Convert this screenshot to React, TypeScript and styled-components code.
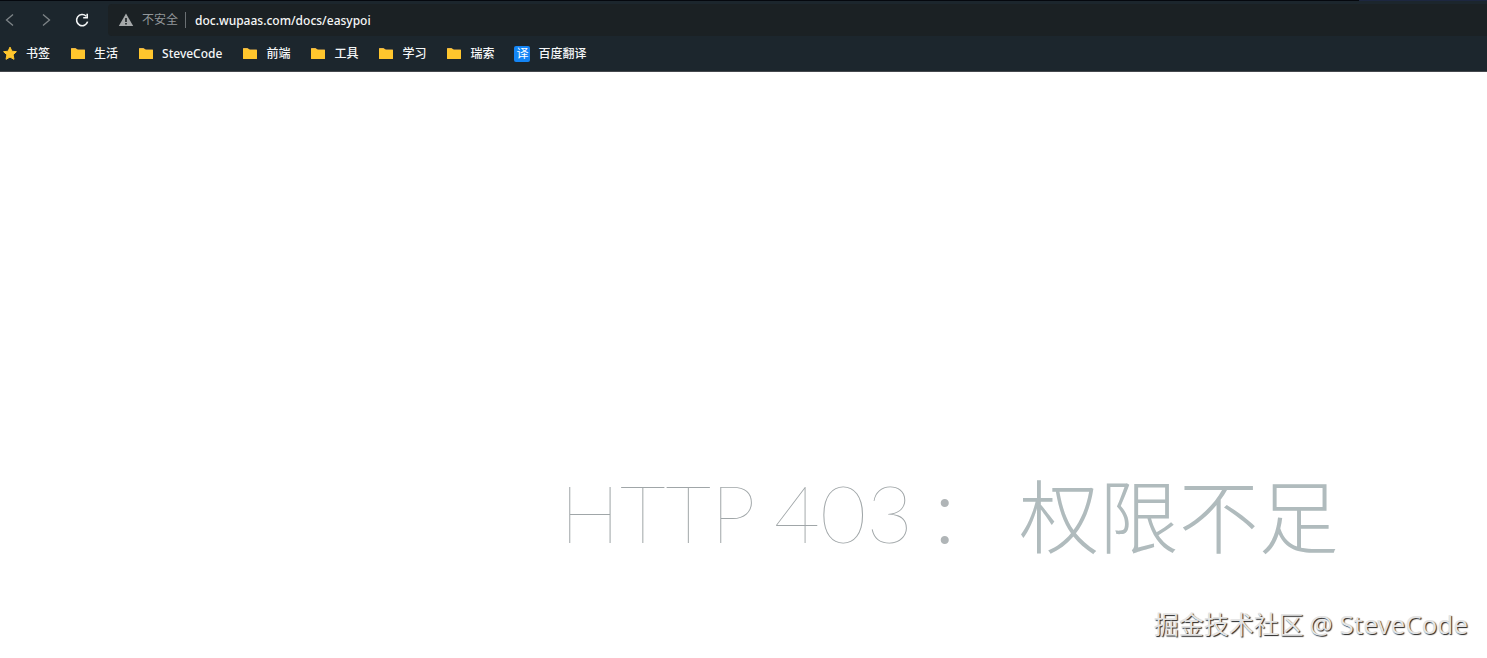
import React from "react";
import styled, { createGlobalStyle } from "styled-components";

const GlobalStyle = createGlobalStyle`
  * { box-sizing: border-box; }
  html, body { margin: 0; background: #ffffff; }
  body, button, input {
    font-family: "Noto Sans", "Noto Sans CJK SC", sans-serif;
    font-size: 12px;
  }
`;

const Shell = styled.div`
  position: relative;
  display: flex;
  flex-direction: column;
  min-height: 100vh;
`;

const Chrome = styled.header`
  background: #1c262d;
  border-bottom: 1px solid #45484d;
`;

const TabEdge = styled.div`
  height: 1px;
  display: flex;
  justify-content: flex-end;
  background: #05080e;
`;

const ActiveTabEdge = styled.div`
  width: 128px;
  background: #1d2740;
`;

const Toolbar = styled.div`
  display: flex;
  align-items: center;
  height: 36px;
  padding-top: 2px;
`;

const NavButton = styled.button<{ $dim?: boolean }>`
  display: flex;
  align-items: center;
  justify-content: center;
  width: 36px;
  height: 32px;
  padding: 0;
  border: 0;
  background: none;
  color: ${(p) => (p.$dim ? "#7f8589" : "#f4f6f7")};

  &:first-child {
    width: 28px;
    justify-content: flex-start;
    padding-left: 2px;
  }
`;

const AddressBar = styled.form`
  display: flex;
  flex: 1;
  align-items: center;
  height: 32px;
  margin-left: 8px;
  padding-left: 10px;
  background: #1b2124;
  border-radius: 4px 0 0 4px;
`;

const Security = styled.label`
  display: flex;
  align-items: center;
  gap: 8px;
  padding-right: 7px;
  color: #92979a;
  line-height: 16px;
  border-right: 1px solid #6b7073;
`;

const UrlInput = styled.input`
  flex: 1;
  min-width: 0;
  padding: 0 0 0 9px;
  border: 0;
  outline: 0;
  background: none;
  color: #f6f7f7;
  font-weight: 500;
`;

const Bookmarks = styled.nav`
  display: flex;
  align-items: center;
  gap: 20px;
  height: 34px;
  padding-left: 2px;
`;

const Bookmark = styled.a`
  display: flex;
  align-items: center;
  gap: 8px;
  color: #f4f6f7;
  line-height: 18px;
  font-weight: 500;
  text-decoration: none;
  white-space: nowrap;
`;

const TranslateBadge = styled.span`
  display: flex;
  align-items: center;
  justify-content: center;
  width: 16px;
  height: 16px;
  border-radius: 2px;
  background: #1485f5;
  color: #ffffff;
  font-weight: 400;
`;

const Page = styled.main`
  flex: 1;
  padding: 380px 0 80px 38%;
`;

const Title = styled.h1`
  display: flex;
  align-items: center;
  margin: 0 0 0 -5px;
  color: #b0bbbd;
  font-family: "Noto Sans CJK SC", sans-serif;
  font-size: 80px;
  font-weight: 300;
  line-height: 120px;
  white-space: nowrap;
`;

const Status = styled.span`
  display: flex;
  gap: 18px;
  color: #a0a6a8;
  font-family: Lato, sans-serif;
  font-weight: 100;
`;

const Colon = styled.span`
  margin: 0 20px 0 14px;
  color: #b0b5b7;
  font-size: 72px;
  font-weight: 100;
`;

const Watermark = styled.div`
  position: absolute;
  right: 19px;
  bottom: 16px;
  color: #e4e4e4;
  font-family: "Noto Sans CJK SC", sans-serif;
  font-size: 25px;
  line-height: 36px;
  text-shadow: 1px 1px 1px #222222;
`;

const Author = styled.span`
  font-family: "Noto Sans", sans-serif;
  font-size: 26px;
`;

const FolderIcon = () => (
  <svg width="16" height="16" viewBox="0 0 16 16" aria-hidden="true">
    <path d="M1 2.500a.5.5 0 0 1 .5-.5h4l2 1.500h7a.5.5 0 0 1 .5.5v1H1z" fill="#e9b44a" />
    <path d="M1 3h5l2 1h6.500a.5.5 0 0 1 .5.5v8a.5.5 0 0 1-.5.5h-13a.5.5 0 0 1-.5-.5z" fill="#ffc62d" />
  </svg>
);

const StarIcon = () => (
  <svg width="16" height="16" viewBox="0 0 16 16" aria-hidden="true">
    <path
      d="M8 1.100l1.900 4.100 4.500.5-3.300 3.100.9 4.500L8 11.100l-4 2.200.9-4.500L1.600 5.700l4.500-.5z"
      fill="#ffc62d"
      stroke="#ffc62d"
      strokeWidth="1"
      strokeLinejoin="round"
    />
  </svg>
);

const ChevronIcon = ({ d }: { d: string }) => (
  <svg width="16" height="16" viewBox="0 0 16 16" fill="none" stroke="currentColor" strokeWidth="1.300" aria-hidden="true">
    <path d={d} />
  </svg>
);

const ReloadIcon = () => (
  <svg width="16" height="16" viewBox="0 0 16 16" fill="none" stroke="currentColor" strokeWidth="1.600" aria-hidden="true">
    <path d="M12.200 4.200A5.600 5.600 0 1 0 13.600 9.600" />
    <path d="M13.200 1.800V5.800H9.200" />
  </svg>
);

const WarningIcon = () => (
  <svg width="16" height="16" viewBox="0 0 16 16" aria-hidden="true">
    <path d="M8 1.500L15.200 14H.8z" fill="#a6a9aa" />
    <path d="M7.200 6h1.600v4H7.200zM7.200 11h1.600v1.600H7.200z" fill="#1b2124" />
  </svg>
);

const folders = ["生活", "SteveCode", "前端", "工具", "学习", "瑞索"];

export default function App() {
  return (
    <Shell>
      <GlobalStyle />
      <Chrome>
        <TabEdge>
          <ActiveTabEdge />
        </TabEdge>
        <Toolbar>
          <NavButton type="button" aria-label="后退" $dim>
            <ChevronIcon d="M11 2.500L4.500 8l6.500 5.500" />
          </NavButton>
          <NavButton type="button" aria-label="前进" $dim>
            <ChevronIcon d="M5 2.500L11.500 8 5 13.500" />
          </NavButton>
          <NavButton type="button" aria-label="刷新">
            <ReloadIcon />
          </NavButton>
          <AddressBar onSubmit={(e) => e.preventDefault()}>
            <Security htmlFor="url">
              <WarningIcon />
              不安全
            </Security>
            <UrlInput id="url" type="text" defaultValue="doc.wupaas.com/docs/easypoi" />
          </AddressBar>
        </Toolbar>
        <Bookmarks>
          <Bookmark href="#">
            <StarIcon />
            书签
          </Bookmark>
          {folders.map((name) => (
            <Bookmark href="#" key={name}>
              <FolderIcon />
              {name}
            </Bookmark>
          ))}
          <Bookmark href="#">
            <TranslateBadge>译</TranslateBadge>
            百度翻译
          </Bookmark>
        </Bookmarks>
      </Chrome>
      <Page>
        <Title>
          <Status>
            <span>HTTP</span> <span>403</span>
          </Status>
          <Colon>：</Colon>
          权限不足
        </Title>
      </Page>
      <Watermark>
        掘金技术社区 <Author>@ SteveCode</Author>
      </Watermark>
    </Shell>
  );
}
